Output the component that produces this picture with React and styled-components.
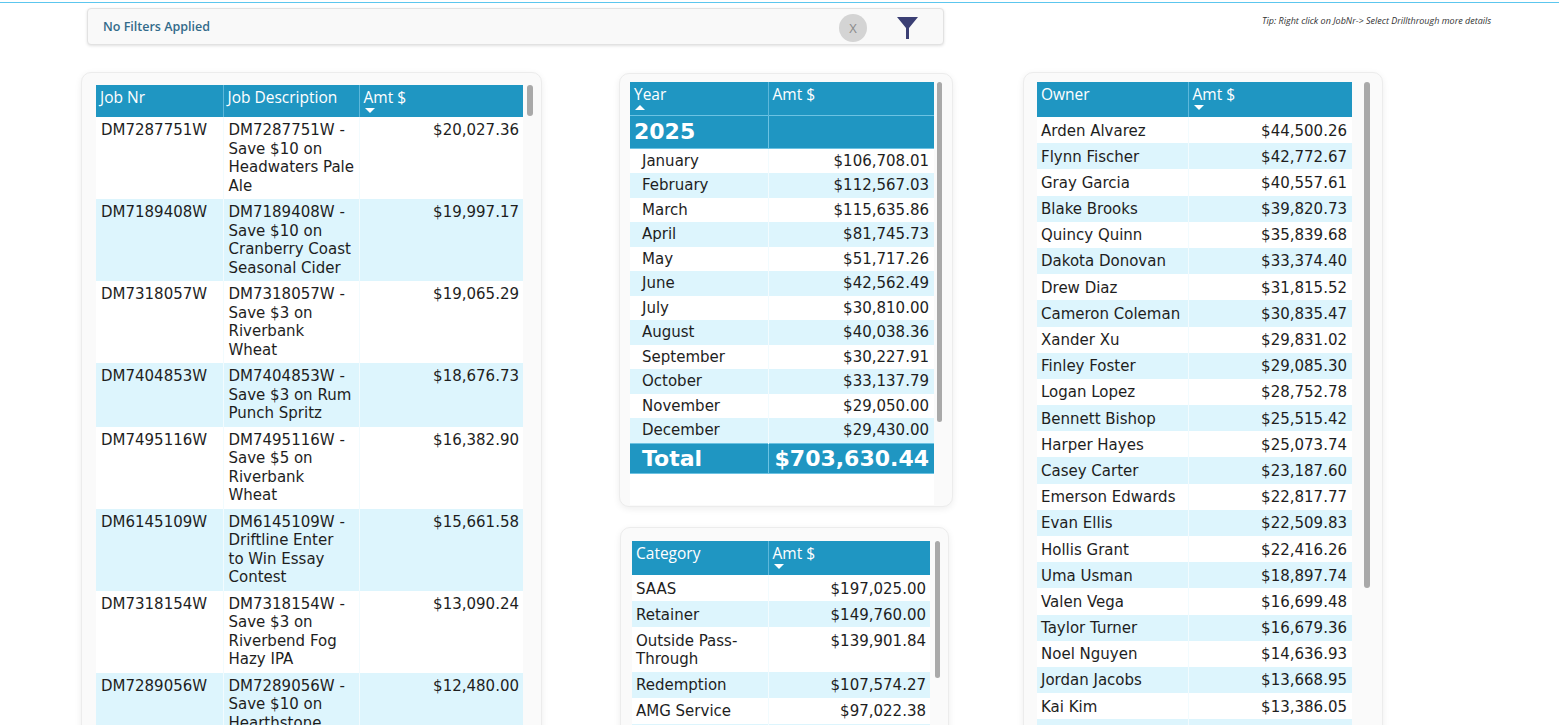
import React from 'react'
import styled, { createGlobalStyle } from 'styled-components'

const GlobalStyle = createGlobalStyle`
  body {
    margin: 0;
    background: #fff;
    font-family: "DejaVu Sans", Verdana, sans-serif;
    color: #222;
    overflow: hidden;
  }
`

// \u00a0 keeps "to Win" together so the line breaks where the report breaks it
const jobs = [
  ['DM7287751W', 'DM7287751W - Save $10 on Headwaters Pale Ale', '$20,027.36'],
  ['DM7189408W', 'DM7189408W - Save $10 on Cranberry Coast Seasonal Cider', '$19,997.17'],
  ['DM7318057W', 'DM7318057W - Save $3 on Riverbank Wheat', '$19,065.29'],
  ['DM7404853W', 'DM7404853W - Save $3 on Rum Punch Spritz', '$18,676.73'],
  ['DM7495116W', 'DM7495116W - Save $5 on Riverbank Wheat', '$16,382.90'],
  ['DM6145109W', 'DM6145109W - Driftline Enter to\u00a0Win Essay Contest', '$15,661.58'],
  ['DM7318154W', 'DM7318154W - Save $3 on Riverbend Fog Hazy IPA', '$13,090.24'],
  ['DM7289056W', 'DM7289056W - Save $10 on Hearthstone Porter', '$12,480.00'],
  ['DM7401122W', 'DM7401122W - Save $5 on Summit Lager', '$11,204.50'],
]

const months = [
  ['January', '$106,708.01'],
  ['February', '$112,567.03'],
  ['March', '$115,635.86'],
  ['April', '$81,745.73'],
  ['May', '$51,717.26'],
  ['June', '$42,562.49'],
  ['July', '$30,810.00'],
  ['August', '$40,038.36'],
  ['September', '$30,227.91'],
  ['October', '$33,137.79'],
  ['November', '$29,050.00'],
  ['December', '$29,430.00'],
]

const categories = [
  ['SAAS', '$197,025.00'],
  ['Retainer', '$149,760.00'],
  ['Outside Pass-Through', '$139,901.84'],
  ['Redemption', '$107,574.27'],
  ['AMG Service', '$97,022.38'],
  ['Media', '$11,347.00'],
]

const owners = [
  ['Arden Alvarez', '$44,500.26'],
  ['Flynn Fischer', '$42,772.67'],
  ['Gray Garcia', '$40,557.61'],
  ['Blake Brooks', '$39,820.73'],
  ['Quincy Quinn', '$35,839.68'],
  ['Dakota Donovan', '$33,374.40'],
  ['Drew Diaz', '$31,815.52'],
  ['Cameron Coleman', '$30,835.47'],
  ['Xander Xu', '$29,831.02'],
  ['Finley Foster', '$29,085.30'],
  ['Logan Lopez', '$28,752.78'],
  ['Bennett Bishop', '$25,515.42'],
  ['Harper Hayes', '$25,073.74'],
  ['Casey Carter', '$23,187.60'],
  ['Emerson Edwards', '$22,817.77'],
  ['Evan Ellis', '$22,509.83'],
  ['Hollis Grant', '$22,416.26'],
  ['Uma Usman', '$18,897.74'],
  ['Valen Vega', '$16,699.48'],
  ['Taylor Turner', '$16,679.36'],
  ['Noel Nguyen', '$14,636.93'],
  ['Jordan Jacobs', '$13,668.95'],
  ['Kai Kim', '$13,386.05'],
  ['Morgan Moore', '$12,904.11'],
]

function App() {
  return (
    <Page>
      <GlobalStyle />
      <TopLine />
      <TopBar>
        <FilterBar>
          <FilterText>No Filters Applied</FilterText>
          <ClearBtn>X</ClearBtn>
          <svg width="21" height="22" viewBox="0 0 21 22">
            <polygon points="0,0 21,0 12,11 12,22 9,22 9,11" fill="#3b3f74" />
          </svg>
        </FilterBar>
        <Tip>Tip: Right click on JobNr-&gt; Select Drillthrough more details</Tip>
      </TopBar>

      <Columns>
        {/* jobs */}
        <Card $w={461} $h={700} $pad="12px 0 0 14px">
          <TableArea $w={427}>
            <Table>
              <colgroup>
                <col style={{ width: 127 }} />
                <col style={{ width: 136 }} />
                <col />
              </colgroup>
              <thead>
                <tr>
                  <Th $h={32}>Job Nr</Th>
                  <Th $h={32}>Job Description</Th>
                  <Th $h={32}>Amt $<SortArrow /></Th>
                </tr>
              </thead>
              <tbody>
                {jobs.map((j) => (
                  <Row key={j[0]} $top={4} $bottom={4}>
                    <Td $left={5}>{j[0]}</Td>
                    <Td $left={5} $right={2}>{j[1]}</Td>
                    <Td $num $right={4}>{j[2]}</Td>
                  </Row>
                ))}
              </tbody>
            </Table>
          </TableArea>
          <ScrollTrack $w={6} $gap={4}>
            <Thumb $h={31} />
          </ScrollTrack>
        </Card>

        <MiddleCol>
          {/* year / month */}
          <Card $w={334} $h={434} $pad="8px 0 0 10px">
            <TableArea $w={304} $h={423}>
              <Table>
                <colgroup>
                  <col style={{ width: 138 }} />
                  <col />
                </colgroup>
                <thead>
                  <tr>
                    <Th $h={33}>Year<SortArrow $up /></Th>
                    <Th $h={33}>Amt $</Th>
                  </tr>
                  <tr>
                    <BigCell $h={32}>2025</BigCell>
                    <BigCell $h={32} />
                  </tr>
                </thead>
                <tbody>
                  {months.map((m) => (
                    <Row key={m[0]} $top={3} $bottom={3}>
                      <Td $left={12}>{m[0]}</Td>
                      <Td $num $right={5}>{m[1]}</Td>
                    </Row>
                  ))}
                </tbody>
                <tfoot>
                  <tr>
                    <BigCell $h={29} $indent={12}>Total</BigCell>
                    <BigCell $h={29} $num>$703,630.44</BigCell>
                  </tr>
                </tfoot>
              </Table>
            </TableArea>
            <ScrollTrack $w={5} $gap={3}>
              <Thumb $h={340} />
            </ScrollTrack>
          </Card>

          {/* category */}
          <Card $w={329} $h={260} $pad="13px 0 0 11px" $mt={20} $ml={1}>
            <TableArea $w={298}>
              <Table>
                <colgroup>
                  <col style={{ width: 136 }} />
                  <col />
                </colgroup>
                <thead>
                  <tr>
                    <Th $h={34}>Category</Th>
                    <Th $h={34}>Amt $<SortArrow /></Th>
                  </tr>
                </thead>
                <tbody>
                  {categories.map((c) => (
                    <Row key={c[0]} $top={4.5} $bottom={3}>
                      <Td $left={4}>{c[0]}</Td>
                      <Td $num $right={4}>{c[1]}</Td>
                    </Row>
                  ))}
                </tbody>
              </Table>
            </TableArea>
            <ScrollTrack $w={5} $gap={5}>
              <Thumb $h={137} />
            </ScrollTrack>
          </Card>
        </MiddleCol>

        {/* owners */}
        <Card $w={360} $h={700} $pad="9px 0 0 13px" $ml={70}>
          <TableArea $w={315}>
            <Table>
              <colgroup>
                <col style={{ width: 151 }} />
                <col />
              </colgroup>
              <thead>
                <tr>
                  <Th $h={35}>Owner</Th>
                  <Th $h={35}>Amt $<SortArrow /></Th>
                </tr>
              </thead>
              <tbody>
                {owners.map((o) => (
                  <Row key={o[0]} $top={4.5} $bottom={3.2}>
                    <Td $left={4}>{o[0]}</Td>
                    <Td $num $right={5}>{o[1]}</Td>
                  </Row>
                ))}
              </tbody>
            </Table>
          </TableArea>
          <ScrollTrack $w={6} $gap={12}>
            <Thumb $h={506} />
          </ScrollTrack>
        </Card>
      </Columns>
    </Page>
  )
}

const Page = styled.div`
  height: 100vh;
  overflow: hidden;
`

const TopLine = styled.div`
  height: 1px;
  margin-top: 2px;
  background: #5cc6ee;
`

const TopBar = styled.div`
  display: flex;
  align-items: flex-start;
  padding-left: 87px;
  margin-top: 5px;
`

const FilterBar = styled.div`
  box-sizing: border-box;
  display: flex;
  align-items: center;
  width: 857px;
  height: 37px;
  padding: 0 25px 0 15px;
  background: #f9f9f9;
  border: 1px solid #e2e2e2;
  border-radius: 4px;
  box-shadow: 0 1px 3px rgba(0, 0, 0, 0.12);

  svg {
    margin-top: 2px;
  }
`

const FilterText = styled.span`
  font-family: "Open Sans", "Noto Sans", sans-serif;
  font-size: 12.5px;
  font-weight: 600;
  color: #336b8a;
  margin-top: -1px;
`

const ClearBtn = styled.div`
  display: flex;
  align-items: center;
  justify-content: center;
  width: 28px;
  height: 28px;
  margin: 2px 30px 0 auto;
  border-radius: 50%;
  background: #d4d4d4;
  color: #8a8a8a;
  font-family: "Open Sans", sans-serif;
  font-size: 13px;
`

const Tip = styled.div`
  margin: 6px 0 0 318px;
  font-family: "Open Sans", "Noto Sans", sans-serif;
  font-size: 9px;
  font-style: italic;
  color: #333;
`

const Columns = styled.div`
  display: flex;
  align-items: flex-start;
  padding-left: 81px;
  margin-top: 27px;
`

const MiddleCol = styled.div`
  display: flex;
  flex-direction: column;
  margin: 1px 0 0 77px;
`

const Card = styled.div`
  box-sizing: border-box;
  display: flex;
  align-items: flex-start;
  flex-shrink: 0;
  width: ${(p) => p.$w}px;
  height: ${(p) => p.$h}px;
  padding: ${(p) => p.$pad};
  margin-top: ${(p) => p.$mt || 0}px;
  margin-left: ${(p) => p.$ml || 0}px;
  background: #fafafa;
  border: 1px solid #ececec;
  border-radius: 10px;
  box-shadow: 0 2px 7px rgba(0, 0, 0, 0.07);
`

const TableArea = styled.div`
  width: ${(p) => p.$w}px;
  height: ${(p) => (p.$h ? `${p.$h}px` : 'auto')};
  flex-shrink: 0;
  background: #fff;
  overflow: hidden;
`

const ScrollTrack = styled.div`
  width: ${(p) => p.$w}px;
  margin-left: ${(p) => p.$gap}px;
  flex-shrink: 0;
`

const Thumb = styled.div`
  height: ${(p) => p.$h}px;
  border-radius: 3px;
  background: #a9a9a9;
`

const Table = styled.table`
  width: 100%;
  table-layout: fixed;
  border-collapse: collapse;
`

const Th = styled.th`
  box-sizing: border-box;
  height: ${(p) => p.$h}px;
  padding: 2px 4px 0;
  vertical-align: top;
  text-align: left;
  background: #1f96c2;
  color: #fff;
  font-family: "Open Sans", "Noto Sans", sans-serif;
  font-size: 15.5px;
  font-weight: 400;
  line-height: 20px;
  border-right: 1px solid #5db7da;

  &:last-child {
    border-right: none;
  }
`

const SortArrow = styled.span`
  display: block;
  width: 0;
  height: 0;
  margin: 1px 0 0 1px;
  border-left: 5px solid transparent;
  border-right: 5px solid transparent;
  ${(p) => (p.$up ? 'border-bottom: 5px solid #fff;' : 'border-top: 5px solid #fff;')}
`

const Row = styled.tr`
  td {
    padding-top: ${(p) => p.$top}px;
    padding-bottom: ${(p) => p.$bottom}px;
  }

  &:nth-child(even) td {
    background: #ddf5fd;
  }
`

const Td = styled.td`
  padding-left: ${(p) => (p.$num ? 4 : p.$left)}px;
  padding-right: ${(p) => p.$right || 4}px;
  vertical-align: top;
  text-align: ${(p) => (p.$num ? 'right' : 'left')};
  font-size: 15px;
  line-height: 18.5px;
  color: #1e1e1e;
  border-right: 1px solid #f2fbfe;

  &:last-child {
    border-right: none;
  }
`

const BigCell = styled.td`
  height: ${(p) => p.$h}px;
  padding: 0 ${(p) => (p.$num ? 5 : 4)}px 0 ${(p) => p.$indent || 4}px;
  background: #1f96c2;
  color: #fff;
  font-size: 22px;
  font-weight: 700;
  line-height: 29px;
  text-align: ${(p) => (p.$num ? 'right' : 'left')};
  border-top: 1px solid #6cc2e2;
  border-bottom: 1px solid #6cc2e2;
  border-right: 1px solid #6cc2e2;

  &:last-child {
    border-right: none;
  }
`

export default App
